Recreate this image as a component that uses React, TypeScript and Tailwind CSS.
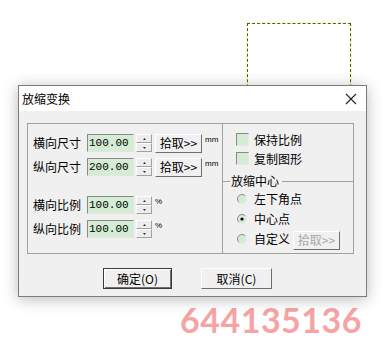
import React from "react";

const CJK = "font-['SimSun','Noto_Sans_CJK_SC',sans-serif]";

function Spinner() {
  return (
    <div className="flex flex-col w-[16px] h-[18px] ml-[2px]">
      {[0, 1].map((i) => (
        <div
          key={i}
          className="flex-1 flex items-center justify-center bg-[#ececec] border border-t-white border-l-white border-r-[#a0a0a0] border-b-[#a0a0a0]"
        >
          <svg width="3" height="2" viewBox="0 0 3 2">
            {i === 0 ? <path d="M1.5 0L3 2H0z" fill="#333" /> : <path d="M0 0h3L1.5 2z" fill="#333" />}
          </svg>
        </div>
      ))}
    </div>
  );
}

function NumField({ value }: { value: string }) {
  return (
    <div className="w-[47px] h-[18px] bg-[#d3ecd3] border border-t-[#8a8a8a] border-l-[#8a8a8a] border-r-[#e4e4e4] border-b-[#e4e4e4] flex items-center pl-[1px] font-['Liberation_Mono',monospace] text-[11px] text-black leading-none">
      {value}
    </div>
  );
}

function PickButton({ disabled }: { disabled?: boolean }) {
  return (
    <div
      className={`w-[47px] h-[19px] flex items-center justify-center bg-[#f0f0f0] border border-t-white border-l-white border-r-[#6e6e6e] border-b-[#6e6e6e] text-[12px] leading-none ${
        disabled ? "text-[#a8a8a8]" : "text-black"
      }`}
    >
      拾取&gt;&gt;
    </div>
  );
}

function Row({ label, value, unit, pick }: { label: string; value: string; unit: string; pick?: boolean }) {
  return (
    <div className="flex items-center h-[18px]">
      <span className="w-[54px] text-[12px] leading-none">{label}</span>
      <NumField value={value} />
      <Spinner />
      {pick && (
        <div className="ml-[3px]">
          <PickButton />
        </div>
      )}
      <span className="ml-[3px] self-start mt-[2px] text-[8px] leading-none font-['Liberation_Sans',sans-serif]">
        {unit}
      </span>
    </div>
  );
}

function Check({ label }: { label: string }) {
  return (
    <div className="flex items-center gap-[5px] h-[13px]">
      <div className="w-[13px] h-[13px] bg-[#d3ecd3] border border-t-[#8a8a8a] border-l-[#8a8a8a] border-r-[#e8e8e8] border-b-[#e8e8e8]" />
      <span className="text-[12px] leading-none">{label}</span>
    </div>
  );
}

function Radio({ label, checked, children }: { label: string; checked?: boolean; children?: React.ReactNode }) {
  return (
    <div className="flex items-center h-[14px]">
      <svg width="10" height="10" viewBox="0 0 10 10" className="ml-[1px]">
        <circle cx="5" cy="5" r="4.5" fill="#d3ecd3" />
        <path d="M8.2 1.8A4.5 4.5 0 0 0 1.8 8.2" stroke="#8a8a8a" fill="none" />
        {checked && <circle cx="5" cy="5" r="1.6" fill="#000" />}
      </svg>
      <span className="ml-[7px] text-[12px] leading-none">{label}</span>
      {children}
    </div>
  );
}

export default function App() {
  return (
    <div className={`relative w-[384px] h-[351px] bg-white overflow-hidden text-black ${CJK}`}>
      {/* selection box on the canvas */}
      <div className="absolute left-[247px] top-[23px] w-[104px] h-[90px] border border-dashed border-[#5c5c00] shadow-[0_0_2px_#e8e8a0]" />

      <div className="relative z-10 ml-[18px] mt-[85px] w-[349px] h-[212px] bg-[#f0f0f0] border border-[#7c7c7c] shadow-[0_2px_14px_rgba(0,0,0,0.28)]">
        <div className="h-[25px] bg-white flex items-center justify-between pl-[3px] pr-[9px]">
          <span className="text-[12px] leading-none">放缩变换</span>
          <svg width="12" height="12" viewBox="0 0 12 12">
            <path d="M1 1L11 11M11 1L1 11" stroke="#222" strokeWidth="1.1" />
          </svg>
        </div>

        <div className="ml-[8px] mt-[12px] w-[327px] h-[131px] border border-[#a0a0a0] flex">
          <div className="w-[195px] border-r border-[#a0a0a0] pl-[5px] pt-[10px] flex flex-col">
            <div className="flex flex-col gap-[6px]">
              <Row label="横向尺寸" value="100.00" unit="mm" pick />
              <Row label="纵向尺寸" value="200.00" unit="mm" pick />
            </div>
            <div className="flex flex-col gap-[6px] mt-[20px]">
              <Row label="横向比例" value="100.00" unit="%" />
              <Row label="纵向比例" value="100.00" unit="%" />
            </div>
          </div>

          <div className="flex-1 flex flex-col pt-[9px]">
            <div className="pl-[13px] flex flex-col gap-[6px]">
              <Check label="保持比例" />
              <Check label="复制图形" />
            </div>
            <div className="flex items-center mt-[9px] h-[14px]">
              <div className="w-[7px] border-t border-[#a0a0a0]" />
              <span className="px-[1px] text-[12px] leading-none">放缩中心</span>
              <div className="flex-1 border-t border-[#a0a0a0] ml-[2px]" />
            </div>
            <div className="pl-[13px] mt-[4px] flex flex-col gap-[6px]">
              <Radio label="左下角点" />
              <Radio label="中心点" checked />
              <Radio label="自定义">
                <div className="ml-[3px] mt-[2px]">
                  <PickButton disabled />
                </div>
              </Radio>
            </div>
          </div>
        </div>

        <div className="flex ml-[84px] mt-[14px] gap-[29px]">
          <div className="w-[69px] h-[21px] flex items-center justify-center bg-[#f0f0f0] border border-[#3a3a3a] shadow-[inset_1px_1px_0_#fff,inset_-1px_-1px_0_#6e6e6e] text-[12px] leading-none">
            确定(O)
          </div>
          <div className="w-[71px] h-[21px] flex items-center justify-center bg-[#f0f0f0] border border-t-white border-l-white border-r-[#6e6e6e] border-b-[#6e6e6e] text-[12px] leading-none">
            取消(C)
          </div>
        </div>
      </div>

      <div className="ml-[180px] mt-[6px] font-['Lato',sans-serif] font-bold text-[34px] leading-none tracking-[0.5px] text-[#f6a3a3]">
        644135136
      </div>
    </div>
  );
}
